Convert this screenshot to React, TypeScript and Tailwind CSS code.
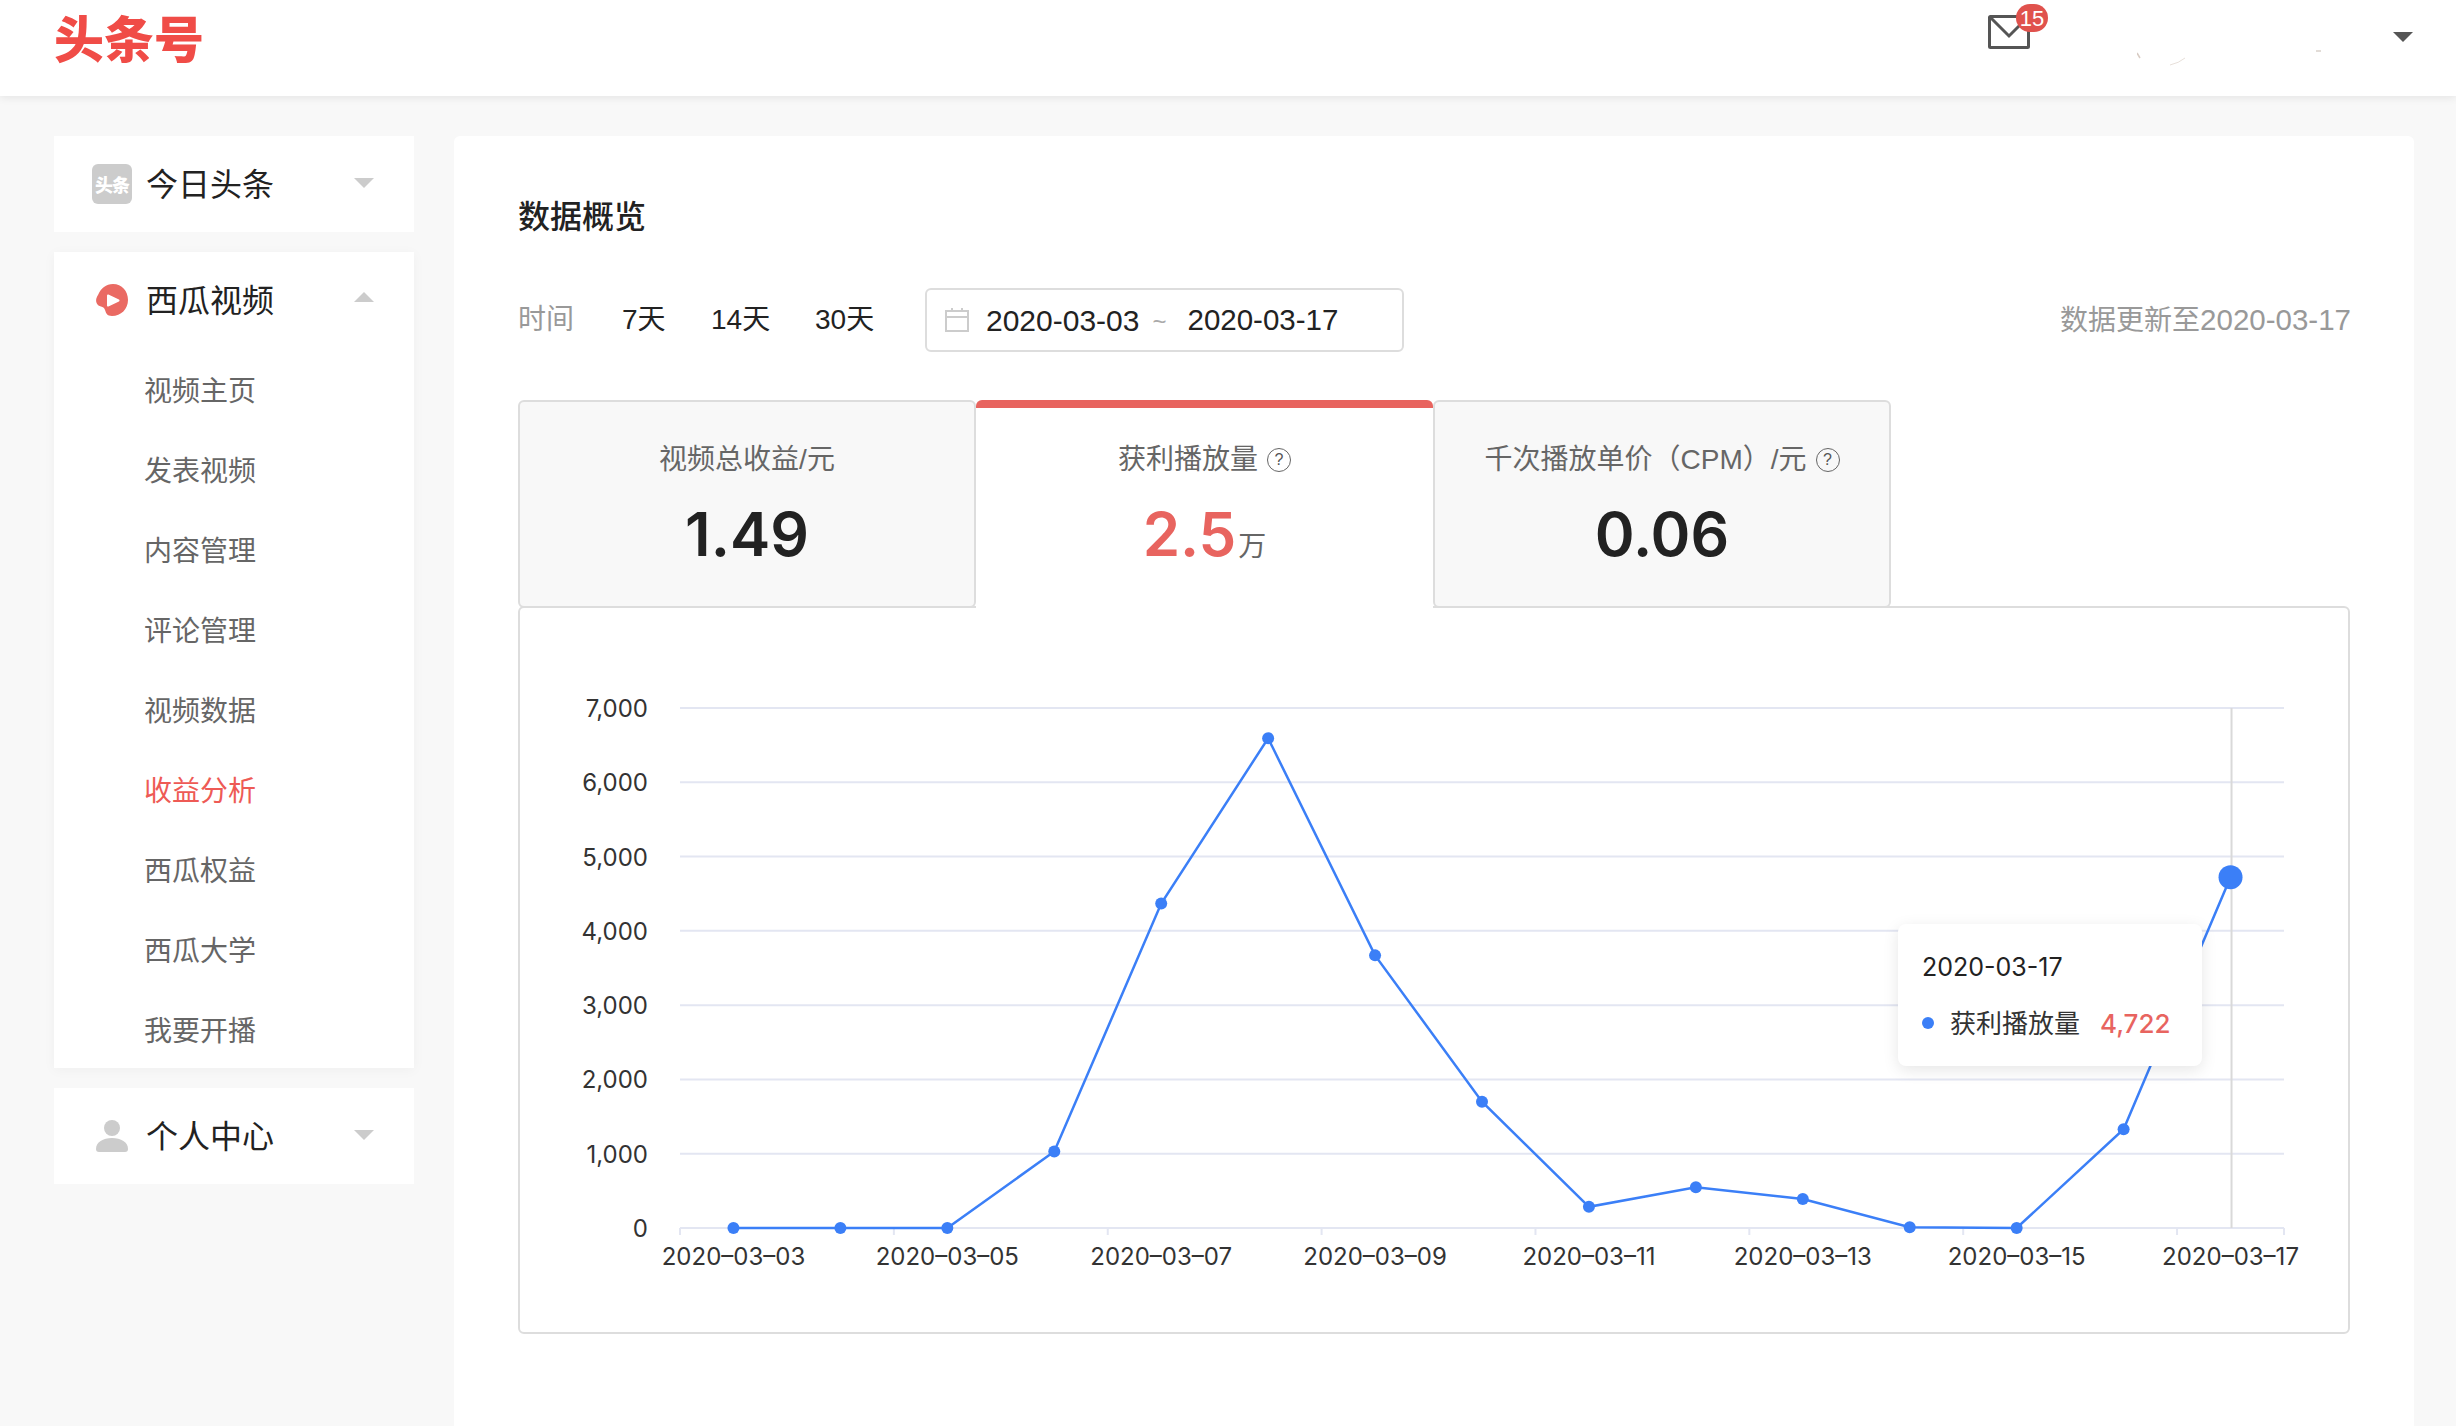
import React from 'react';

const menuItems = ['视频主页', '发表视频', '内容管理', '评论管理', '视频数据', '收益分析', '西瓜权益', '西瓜大学', '我要开播'];

const values = [0, 0, 0, 1030, 4367, 6593, 3670, 1700, 285, 548, 390, 10, 0, 1329, 4722];
const dates = ['2020–03–03', '2020–03–05', '2020–03–07', '2020–03–09', '2020–03–11', '2020–03–13', '2020–03–15', '2020–03–17'];

const Caret = ({ up = false, color = '#cccccc', className = '' }: { up?: boolean; color?: string; className?: string }) => (
  <svg width="20" height="10" viewBox="0 0 20 10" className={className}>
    <path d={up ? 'M0 10L10 0L20 10Z' : 'M0 0L20 0L10 10Z'} fill={color} />
  </svg>
);

const HelpIcon = () => (
  <span className="ml-[9px] inline-flex h-6 w-6 items-center justify-center rounded-full border-[1.5px] border-[#666666] text-[16px] leading-none text-[#555555]">
    ?
  </span>
);

const Chart = () => {
  // chart area inside the svg
  const left = 160;
  const right = 1764;
  const top = 100;
  const bottom = 620;
  const band = (right - left) / 15;
  const xAt = (i: number) => left + band * (i + 0.5);
  const yAt = (v: number) => bottom - (v / 7000) * (bottom - top);
  const points = values.map((v, i) => `${xAt(i)},${yAt(v)}`).join(' ');
  const ticks = [0, 2, 4, 6, 8, 10, 12, 14, 15];

  return (
    <svg width="1828" height="723" viewBox="0 0 1828 723" className="block">
      {[0, 1, 2, 3, 4, 5, 6, 7].map((n) => (
        <g key={n}>
          <line x1={left} x2={right} y1={yAt(n * 1000)} y2={yAt(n * 1000)} stroke="#e3e6f2" strokeWidth="2" />
          <text x="128" y={yAt(n * 1000)} dy="9" textAnchor="end" fontSize="24" fill="#333333">
            {n === 0 ? '0' : `${n},000`}
          </text>
        </g>
      ))}
      {ticks.map((t) => (
        <line key={t} x1={left + band * t} x2={left + band * t} y1={bottom} y2={bottom + 7} stroke="#e3e6f2" strokeWidth="2" />
      ))}
      {dates.map((d, i) => (
        <text key={d} x={xAt(i * 2)} y="657" textAnchor="middle" fontSize="24" fill="#333333">
          {d}
        </text>
      ))}
      <line x1={xAt(14) + 1} x2={xAt(14) + 1} y1={top} y2={bottom} stroke="#d9d9d9" strokeWidth="2" />
      <polyline points={points} fill="none" stroke="#3b7ff7" strokeWidth="2.5" />
      {values.map((v, i) => (
        <circle key={i} cx={xAt(i)} cy={yAt(v)} r={i === 14 ? 12 : 6} fill="#3b7ff7" />
      ))}
    </svg>
  );
};

const App: React.FC = () => {
  return (
    <div className="flex h-[1426px] flex-col overflow-hidden bg-[#f8f8f8] font-['Liberation_Sans','Noto_Sans_CJK_SC',sans-serif] text-[#222222]">
      {/* Header */}
      <header className="relative z-20 flex h-24 shrink-0 items-start bg-white pl-[54px] shadow-[0_2px_8px_rgba(0,0,0,0.08)]">
        <span className="mt-[7px] w-[152px] shrink-0 font-['Noto_Sans_CJK_SC',sans-serif] text-[50px] leading-[58px] font-black whitespace-nowrap text-[#f04c47]">头条号</span>
        <div className="relative mt-[15px] ml-[1782px] h-[34px] w-[42px]">
          <svg width="42" height="34" viewBox="0 0 42 34">
            <rect x="1.5" y="1.5" width="39" height="31" rx="1" fill="none" stroke="#555555" strokeWidth="3" />
            <path d="M3 3L21 21L39 3" fill="none" stroke="#555555" strokeWidth="3" />
          </svg>
          <span className="absolute top-[-11px] left-[28px] flex h-7 w-8 items-center justify-center rounded-full bg-[#e0524d] text-[22px] text-white">15</span>
        </div>
        <svg width="190" height="20" viewBox="0 0 190 20" className="mt-[50px] ml-[107px]">
          <path d="M0 3L3 8" stroke="#d8ccc4" strokeWidth="1.5" fill="none" />
          <path d="M33 15Q42 13 48 8" stroke="#e8e0da" strokeWidth="1" fill="none" />
          <path d="M179 1L184 1" stroke="#d8d0ca" strokeWidth="1.5" fill="none" />
        </svg>
        <div className="mt-8 ml-[66px]">
          <Caret color="#555555" />
        </div>
      </header>

      <div className="flex min-h-0 flex-1 gap-10 pt-10 pl-[54px]">
        {/* Sidebar */}
        <aside className="flex w-[360px] shrink-0 flex-col gap-5">
          <div className="flex h-24 items-center bg-white pr-10 pl-[38px]">
            <span className="flex h-10 w-10 items-center justify-center rounded-md bg-[#cccccc] font-['Noto_Sans_CJK_SC',sans-serif] text-[18px] font-black tracking-[-1px] text-white">头条</span>
            <span className="ml-[14px] flex-1 pt-[2px] text-[32px]">今日头条</span>
            <Caret className="-translate-y-[1px]" />
          </div>

          <div className="bg-white shadow-[0_2px_12px_rgba(0,0,0,0.04)]">
            <div className="flex h-24 items-center pr-10 pl-[42px]">
              <svg width="32" height="32" viewBox="0 0 32 32">
                <path d="M17 0C26 0 32 7 32 16C32 25 25 32 16 32C11 32 10 29 9 26C8 22 4 23 2 21C-1 18 0 14 2 11C5 4 10 0 17 0Z" fill="#ea6a63" />
                <path d="M12 11.5L22.5 16.5L12 21.5Z" fill="#ffffff" stroke="#ffffff" strokeWidth="2" strokeLinejoin="round" />
              </svg>
              <span className="ml-[18px] flex-1 pt-[2px] text-[32px]">西瓜视频</span>
              <Caret up className="-translate-y-[3px]" />
            </div>
            {menuItems.map((item) => (
              <div
                key={item}
                className={`flex h-20 items-center pt-2 pl-[90px] text-[28px] ${item === '收益分析' ? 'text-[#ee5a55]' : 'text-[#666666]'}`}
              >
                {item}
              </div>
            ))}
          </div>

          <div className="flex h-24 items-center bg-white pr-10 pl-[42px]">
            <svg width="32" height="32" viewBox="0 0 32 32">
              <circle cx="16" cy="8" r="8" fill="#cccccc" />
              <path d="M0 29C0 22 7 18 16 18C25 18 32 22 32 29C32 31 31 32 29 32L3 32C1 32 0 31 0 29Z" fill="#cccccc" />
            </svg>
            <span className="ml-[18px] flex-1 pt-[2px] text-[32px]">个人中心</span>
            <Caret className="-translate-y-[1px]" />
          </div>
        </aside>

        {/* Main panel */}
        <main className="w-[1960px] shrink-0 rounded-t-md bg-white px-16 pt-[59px]">
          <h1 className="h-11 text-[32px] leading-[44px] font-medium text-[#222222]">数据概览</h1>

          <div className="mt-[49px] flex h-16 items-center text-[28px]">
            <span className="w-[104px] text-[#999999]">时间</span>
            <span className="w-[89px]">7天</span>
            <span className="w-[104px]">14天</span>
            <span className="w-[110px]">30天</span>
            <div className="flex h-16 w-[479px] items-center rounded-md border-2 border-[#dddddd] pl-[18px]">
              <svg width="24" height="24" viewBox="0 0 24 24">
                <path d="M1 3H23V23H1ZM1 9H23M7 0V4M17 0V4" fill="none" stroke="#cccccc" strokeWidth="2" />
              </svg>
              <span className="ml-[17px] text-[30px]">2020-03-03</span>
              <span className="mt-1 mr-[21px] ml-[13px] text-[24px] text-[#aaaaaa]">~</span>
              <span className="text-[29.5px]">2020-03-17</span>
            </div>
            <span className="-mr-[1px] ml-auto text-[#999999]">
              数据更新至<span className="text-[29.5px]">2020-03-17</span>
            </span>
          </div>

          {/* Metric tabs */}
          <div className="relative z-10 mt-12 flex h-[208px] w-[1373px]">
            <div className="flex w-[458px] flex-col items-center rounded-t-md rounded-b-md border-2 border-[#dddddd] bg-[#f8f8f8] pt-[40px]">
              <div className="flex h-9 items-center text-[28px] text-[#666666]">视频总收益/元</div>
              <div className="mt-[21px] font-['Inter',sans-serif] text-[60.5px] leading-[70px] font-semibold">1.49</div>
            </div>
            <div className="flex w-[457px] flex-col items-center rounded-t-md border-t-8 border-[#e8645f] bg-white pt-[34px]">
              <div className="flex h-9 items-center text-[28px] text-[#666666]">
                获利播放量
                <HelpIcon />
              </div>
              <div className="mt-[21px] flex items-baseline font-['Inter',sans-serif] text-[60px] leading-[70px] font-semibold text-[#e8645f]">
                2.5
                <span className="ml-[2px] font-['Liberation_Sans','Noto_Sans_CJK_SC',sans-serif] text-[28px] font-normal text-[#666666]">万</span>
              </div>
            </div>
            <div className="flex w-[458px] flex-col items-center rounded-t-md rounded-b-md border-2 border-[#dddddd] bg-[#f8f8f8] pt-[40px]">
              <div className="flex h-9 items-center text-[28px] text-[#666666]">
                千次播放单价（CPM）/元
                <HelpIcon />
              </div>
              <div className="mt-[21px] font-['Inter',sans-serif] text-[60.5px] leading-[70px] font-semibold">0.06</div>
            </div>
          </div>

          {/* Chart */}
          <div className="relative -mt-[2px] h-[728px] rounded-md border-2 border-[#dddddd] font-['Inter','Noto_Sans_CJK_SC',sans-serif]">
            <Chart />
            <div className="absolute top-[316px] left-[1378px] h-[142px] w-[304px] rounded-lg bg-white pt-[28px] pl-[24px] shadow-[0_4px_16px_rgba(0,0,0,0.1)]">
              <div className="text-[25px] leading-[30px] text-[#222222]">2020-03-17</div>
              <div className="mt-[19px] flex h-[44px] items-center">
                <span className="h-3 w-3 rounded-full bg-[#3b7ff7]" />
                <span className="ml-[16px] text-[26px] text-[#333333]">获利播放量</span>
                <span className="ml-[20px] text-[26px] font-medium text-[#e8645f]">4,722</span>
              </div>
            </div>
          </div>
        </main>
      </div>
    </div>
  );
};

export default App;
